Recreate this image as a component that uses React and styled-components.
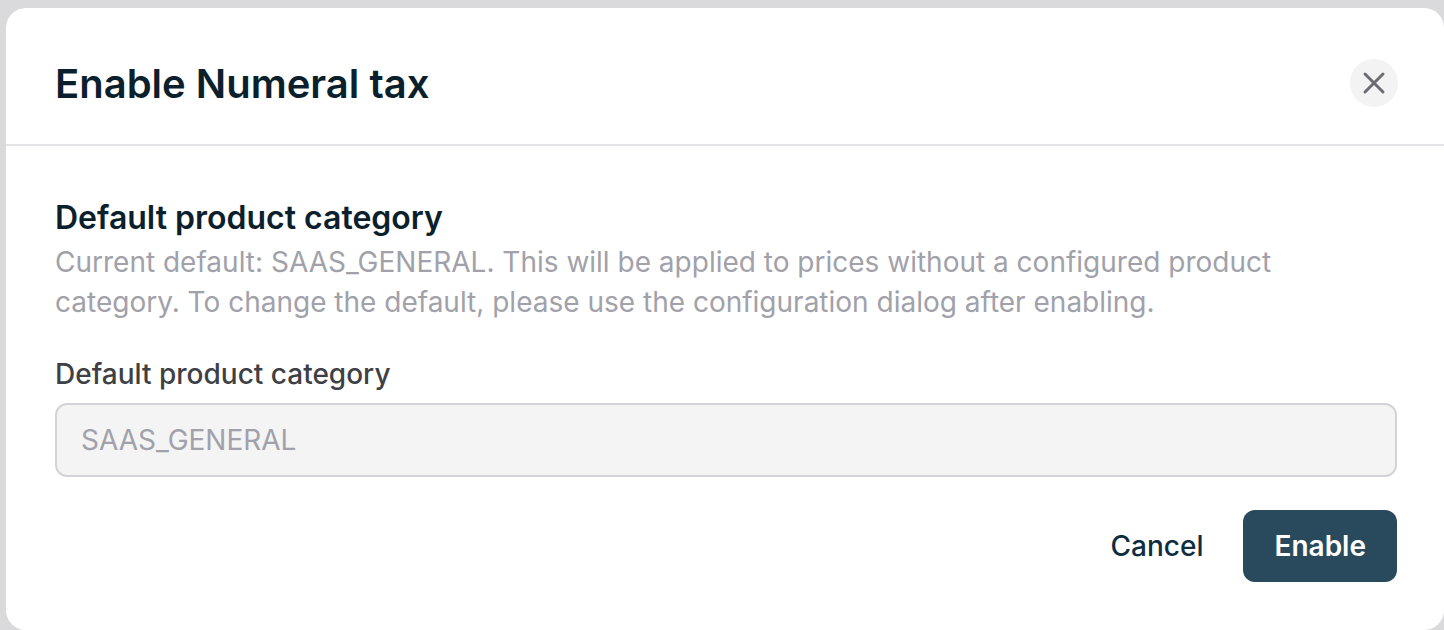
import styled, { createGlobalStyle } from "styled-components";
import { X } from "lucide-react";

const GlobalStyle = createGlobalStyle`
  html, body {
    margin: 0;
    padding: 0;
    background: #dadadc;
    font-family: Inter, "Noto Sans", sans-serif;
    -webkit-font-smoothing: antialiased;
  }
`;

const Page = styled.div`
  padding: 8px 0 0 6px;
  height: 630px;
  box-sizing: border-box;
  overflow: hidden;
`;

const Modal = styled.div`
  width: 1438px;
  height: 622px;
  background: #ffffff;
  border-radius: 20px;
  display: flex;
  flex-direction: column;
  box-sizing: border-box;
`;

const Header = styled.div`
  display: flex;
  align-items: center;
  justify-content: space-between;
  height: 138px;
  padding: 14px 46px 0 49px;
  border-bottom: 2px solid #e4e4e7;
  box-sizing: border-box;
`;

const Title = styled.h1`
  margin: 0;
  font-size: 40px;
  font-weight: 600;
  color: #0c1f2c;
`;

const CloseButton = styled.button`
  width: 48px;
  height: 48px;
  border-radius: 50%;
  border: none;
  background: #f3f3f4;
  color: #6b6b72;
  display: flex;
  align-items: center;
  justify-content: center;
  padding: 0;
  cursor: pointer;
`;

const Body = styled.div`
  display: flex;
  flex-direction: column;
  padding: 52px 47px 0 49px;
`;

const SectionTitle = styled.h2`
  margin: 0;
  font-size: 32px;
  font-weight: 600;
  line-height: 40px;
  color: #0c1f2c;
`;

const Description = styled.p`
  margin: 4px 0 0;
  font-size: 28px;
  line-height: 40px;
  color: #a1a1aa;
`;

const Label = styled.label`
  display: block;
  margin-top: 32px;
  font-size: 28px;
  font-weight: 500;
  line-height: 40px;
  color: #3f3f46;
`;

const Input = styled.input`
  margin-top: 9px;
  height: 74px;
  box-sizing: border-box;
  border: 2px solid #d4d4d8;
  border-radius: 12px;
  background: #f4f4f5;
  padding: 0 24px;
  font-family: inherit;
  font-size: 28px;
  color: #a1a1aa;
  outline: none;
`;

const Footer = styled.div`
  display: flex;
  justify-content: flex-end;
  align-items: center;
  gap: 40px;
  margin-top: 33px;
`;

const TextButton = styled.button`
  border: none;
  background: none;
  padding: 0;
  font-family: inherit;
  font-size: 28px;
  font-weight: 500;
  color: #0f2e40;
  cursor: pointer;
`;

const PrimaryButton = styled.button`
  height: 72px;
  padding: 0 31px;
  border: none;
  border-radius: 12px;
  background: #284a5c;
  color: #ffffff;
  font-family: inherit;
  font-size: 28px;
  font-weight: 600;
  cursor: pointer;
`;

export default function App() {
  return (
    <>
      <GlobalStyle />
      <Page>
        <Modal>
          <Header>
            <Title>Enable Numeral tax</Title>
            <CloseButton aria-label="Close">
              <X size={36} strokeWidth={2} />
            </CloseButton>
          </Header>
          <Body>
            <SectionTitle>Default product category</SectionTitle>
            <Description>
              Current default: SAAS_GENERAL. This will be applied to prices
              without a configured product category. To change the default,
              please use the configuration dialog after enabling.
            </Description>
            <Label htmlFor="category">Default product category</Label>
            <Input id="category" value="SAAS_GENERAL" readOnly disabled />
            <Footer>
              <TextButton>Cancel</TextButton>
              <PrimaryButton>Enable</PrimaryButton>
            </Footer>
          </Body>
        </Modal>
      </Page>
    </>
  );
}
